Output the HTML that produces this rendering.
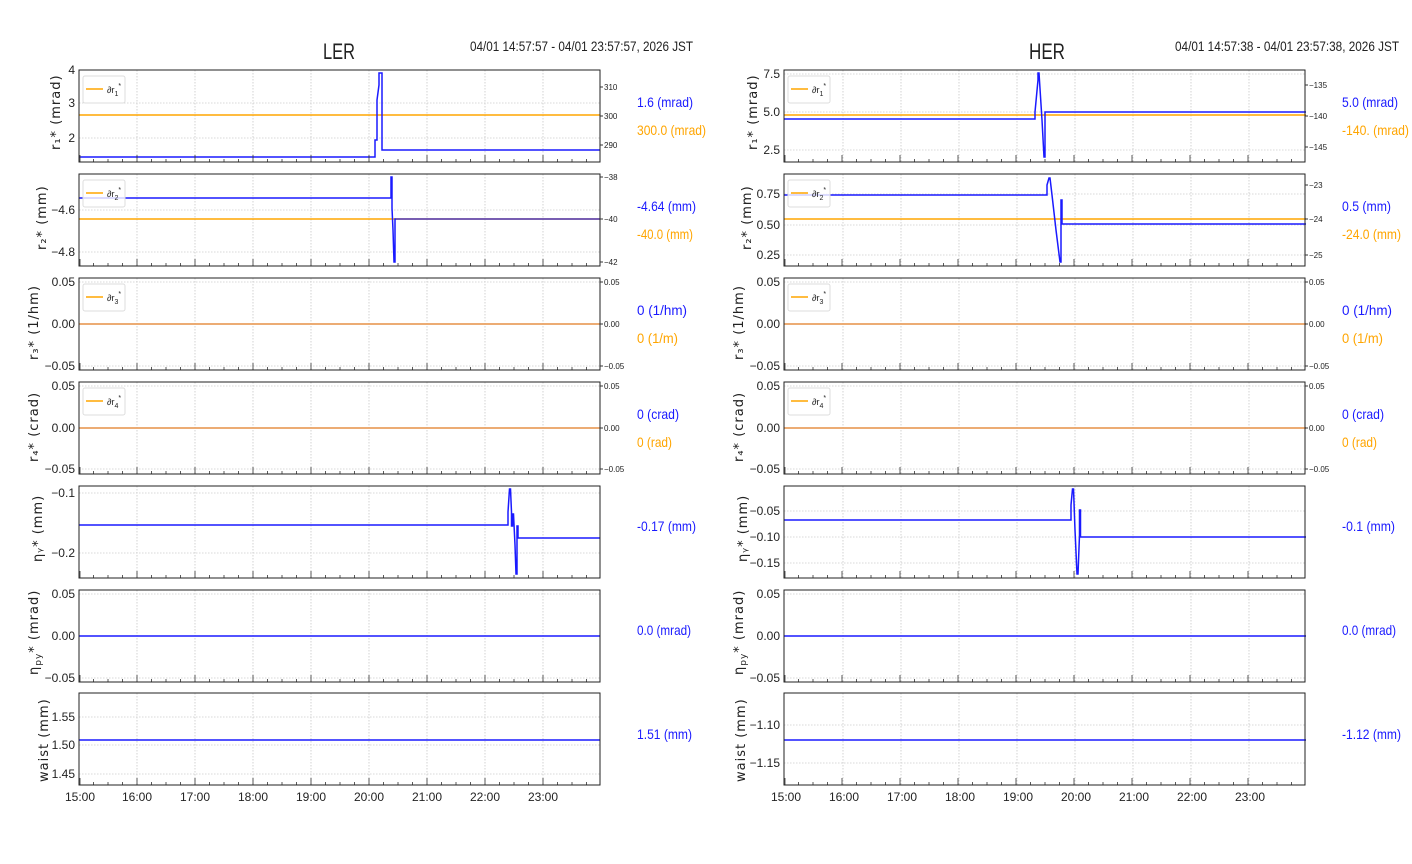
<!DOCTYPE html>
<html><head><meta charset="utf-8"><style>
html,body{margin:0;padding:0;background:#fff;width:1412px;height:864px;overflow:hidden}
svg{display:block}
text{font-family:"Liberation Sans Narrow","Liberation Sans",sans-serif;fill:#222}
.yl{font-size:12px;text-anchor:end}
.yr{font-size:8px}
.ax{font-family:"DejaVu Sans","Liberation Sans",sans-serif;font-size:13px;letter-spacing:1px}
.b{fill:#1a1aff;font-size:14px}
.o{fill:#ffa500;font-size:14px}
.xt{font-size:12px;text-anchor:middle}
</style></head><body>
<svg width="1412" height="864" viewBox="0 0 1412 864" xmlns="http://www.w3.org/2000/svg">
<defs>
<g id="vg"><path d="M137 0V92M195 0V92M253 0V92M311 0V92M369 0V92M427 0V92M485 0V92M543 0V92" stroke="#c8c8c8" stroke-width="0.8" stroke-dasharray="1.5,1.5" fill="none"/></g>
<g id="tk"><path d="M80 92v-7M93.5 92v-3M108 92v-3M122.5 92v-3M137 92v-7M151.5 92v-3M166 92v-3M180.5 92v-3M195 92v-7M209.5 92v-3M224 92v-3M238.5 92v-3M253 92v-7M267.5 92v-3M282 92v-3M296.5 92v-3M311 92v-7M325.5 92v-3M340 92v-3M354.5 92v-3M369 92v-7M383.5 92v-3M398 92v-3M412.5 92v-3M427 92v-7M441.5 92v-3M456 92v-3M470.5 92v-3M485 92v-7M499.5 92v-3M514 92v-3M528.5 92v-3M543 92v-7M557.5 92v-3M572 92v-3M586.5 92v-3" stroke="#333" stroke-width="0.8" fill="none"/>
<rect x="79" y="0" width="521" height="92" fill="none" stroke="#222" stroke-width="1"/></g>
</defs>

<text x="339" y="59" style="font-size:22px;text-anchor:middle" textLength="32" lengthAdjust="spacingAndGlyphs">LER</text>
<text x="470" y="51" style="font-size:14px" textLength="223" lengthAdjust="spacingAndGlyphs">04/01 14:57:57 - 04/01 23:57:57, 2026 JST</text>
<text x="1047" y="59" style="font-size:22px;text-anchor:middle" textLength="36" lengthAdjust="spacingAndGlyphs">HER</text>
<text x="1175" y="51" style="font-size:14px" textLength="224" lengthAdjust="spacingAndGlyphs">04/01 14:57:38 - 04/01 23:57:38, 2026 JST</text>

<g>
<use href="#vg" y="70"/>
<path d="M79 103H600M79 138H600" stroke="#ccc" stroke-width="0.8" stroke-dasharray="1.5,1.5"/>
<path d="M79 115H600" stroke="#ffa500" stroke-width="1.5"/>
<path d="M79 157H375V140L377 140V100L379 85V73H382V150H600" stroke="#1a1aff" stroke-width="1.5" fill="none"/>
<use href="#tk" y="70"/>
<rect x="83" y="76" width="42" height="27" fill="#fff" stroke="#ddd" rx="2"/>
<path d="M86 89H103" stroke="#ffa500" stroke-width="1.5"/><text x="107" y="93" style="font-size:9px">∂r<tspan font-size="7" dy="3">1</tspan><tspan font-size="7" dy="-8">*</tspan></text>
<text class="yl" x="75" y="74">4</text><text class="yl" x="75" y="107">3</text><text class="yl" x="75" y="142">2</text>
<path d="M600 87h3M600 116h3M600 145h3" stroke="#333"/>
<text class="yr" x="604" y="90">310</text><text class="yr" x="604" y="119">300</text><text class="yr" x="604" y="148">290</text>
<text class="ax" transform="translate(60 150) rotate(-90)">r₁* (mrad)</text>
<text class="b" x="637" y="107" textLength="56" lengthAdjust="spacingAndGlyphs">1.6 (mrad)</text><text class="o" x="637" y="135" textLength="69" lengthAdjust="spacingAndGlyphs">300.0 (mrad)</text>

<use href="#vg" y="174"/>
<path d="M79 210H600M79 252H600" stroke="#ccc" stroke-width="0.8" stroke-dasharray="1.5,1.5"/>
<path d="M79 219H600" stroke="#ffa500" stroke-width="1.5"/>
<path d="M79 198H391V177H392V208L393 230L394 262H395V219H600" stroke="#1a1aff" stroke-width="1.5" fill="none"/>
<path d="M396 219H600" stroke="#b07050" stroke-width="1" opacity="0.5"/>
<use href="#tk" y="174"/>
<rect x="83" y="180" width="42" height="27" fill="#fff" fill-opacity="0.8" stroke="#ddd" rx="2"/>
<path d="M86 193H103" stroke="#ffa500" stroke-width="1.5"/><text x="107" y="197" style="font-size:9px">∂r<tspan font-size="7" dy="3">2</tspan><tspan font-size="7" dy="-8">*</tspan></text>
<text class="yl" x="75" y="214">−4.6</text><text class="yl" x="75" y="256">−4.8</text>
<path d="M600 177h3M600 219h3M600 262h3" stroke="#333"/>
<text class="yr" x="604" y="180">−38</text><text class="yr" x="604" y="222">−40</text><text class="yr" x="604" y="265">−42</text>
<text class="ax" transform="translate(46 250) rotate(-90)">r₂* (mm)</text>
<text class="b" x="637" y="211" textLength="59" lengthAdjust="spacingAndGlyphs">-4.64 (mm)</text><text class="o" x="637" y="239" textLength="56" lengthAdjust="spacingAndGlyphs">-40.0 (mm)</text>

<use href="#vg" y="278"/>
<path d="M79 282H600M79 366H600" stroke="#ccc" stroke-width="0.8" stroke-dasharray="1.5,1.5"/>
<path d="M79 324H600" stroke="#e9a060" stroke-width="1.8"/>
<use href="#tk" y="278"/>
<rect x="83" y="284" width="42" height="27" fill="#fff" stroke="#ddd" rx="2"/>
<path d="M86 297H103" stroke="#ffa500" stroke-width="1.5"/><text x="107" y="301" style="font-size:9px">∂r<tspan font-size="7" dy="3">3</tspan><tspan font-size="7" dy="-8">*</tspan></text>
<text class="yl" x="75" y="286">0.05</text><text class="yl" x="75" y="328">0.00</text><text class="yl" x="75" y="370">−0.05</text>
<path d="M600 282h3M600 324h3M600 366h3" stroke="#333"/>
<text class="yr" x="604" y="285">0.05</text><text class="yr" x="604" y="327">0.00</text><text class="yr" x="604" y="369">−0.05</text>
<text class="ax" transform="translate(38 360) rotate(-90)">r₃* (1/hm)</text>
<text class="b" x="637" y="315" textLength="50" lengthAdjust="spacingAndGlyphs">0 (1/hm)</text><text class="o" x="637" y="343" textLength="41" lengthAdjust="spacingAndGlyphs">0 (1/m)</text>

<use href="#vg" y="382"/>
<path d="M79 386H600M79 469H600" stroke="#ccc" stroke-width="0.8" stroke-dasharray="1.5,1.5"/>
<path d="M79 428H600" stroke="#e9a060" stroke-width="1.8"/>
<use href="#tk" y="382"/>
<rect x="83" y="388" width="42" height="27" fill="#fff" stroke="#ddd" rx="2"/>
<path d="M86 401H103" stroke="#ffa500" stroke-width="1.5"/><text x="107" y="405" style="font-size:9px">∂r<tspan font-size="7" dy="3">4</tspan><tspan font-size="7" dy="-8">*</tspan></text>
<text class="yl" x="75" y="390">0.05</text><text class="yl" x="75" y="432">0.00</text><text class="yl" x="75" y="473">−0.05</text>
<path d="M600 386h3M600 428h3M600 469h3" stroke="#333"/>
<text class="yr" x="604" y="389">0.05</text><text class="yr" x="604" y="431">0.00</text><text class="yr" x="604" y="472">−0.05</text>
<text class="ax" transform="translate(38 462) rotate(-90)">r₄* (crad)</text>
<text class="b" x="637" y="419" textLength="42" lengthAdjust="spacingAndGlyphs">0 (crad)</text><text class="o" x="637" y="447" textLength="35" lengthAdjust="spacingAndGlyphs">0 (rad)</text>

<use href="#vg" y="486"/>
<path d="M79 493H600M79 553H600" stroke="#ccc" stroke-width="0.8" stroke-dasharray="1.5,1.5"/>
<path d="M79 525H508V512L509.5 489H510.5L511.5 512V526H512.5V514H513.5L515 545L516 574H517V526H518V538H600" stroke="#1a1aff" stroke-width="1.5" fill="none"/>
<use href="#tk" y="486"/>
<text class="yl" x="75" y="497">−0.1</text><text class="yl" x="75" y="557">−0.2</text>
<text class="ax" transform="translate(42 562) rotate(-90)">ηᵧ* (mm)</text>
<text class="b" x="637" y="531" textLength="59" lengthAdjust="spacingAndGlyphs">-0.17 (mm)</text>

<use href="#vg" y="590"/>
<path d="M79 594H600M79 678H600" stroke="#ccc" stroke-width="0.8" stroke-dasharray="1.5,1.5"/>
<path d="M79 636H600" stroke="#1a1aff" stroke-width="1.5"/>
<use href="#tk" y="590"/>
<text class="yl" x="75" y="598">0.05</text><text class="yl" x="75" y="640">0.00</text><text class="yl" x="75" y="682">−0.05</text>
<text class="ax" transform="translate(38 675) rotate(-90)">η<tspan font-size="9" dy="3">py</tspan><tspan dy="-3">* (mrad)</tspan></text>
<text class="b" x="637" y="635" textLength="54" lengthAdjust="spacingAndGlyphs">0.0 (mrad)</text>

<use href="#vg" y="693"/>
<path d="M79 717H600M79 745H600M79 774H600" stroke="#ccc" stroke-width="0.8" stroke-dasharray="1.5,1.5"/>
<path d="M79 740H600" stroke="#1a1aff" stroke-width="1.5"/>
<use href="#tk" y="693"/>
<text class="yl" x="75" y="721">1.55</text><text class="yl" x="75" y="749">1.50</text><text class="yl" x="75" y="778">1.45</text>
<text class="ax" transform="translate(48 782) rotate(-90)">waist (mm)</text>
<text class="b" x="637" y="739" textLength="55" lengthAdjust="spacingAndGlyphs">1.51 (mm)</text>

<text class="xt" x="80" y="801">15:00</text><text class="xt" x="137" y="801">16:00</text><text class="xt" x="195" y="801">17:00</text><text class="xt" x="253" y="801">18:00</text><text class="xt" x="311" y="801">19:00</text><text class="xt" x="369" y="801">20:00</text><text class="xt" x="427" y="801">21:00</text><text class="xt" x="485" y="801">22:00</text><text class="xt" x="543" y="801">23:00</text>
</g>

<g>
<use href="#vg" x="706" y="70"/>
<path d="M784 74H1306M784 112H1306M784 150H1306" stroke="#ccc" stroke-width="0.8" stroke-dasharray="1.5,1.5"/>
<path d="M784 115H1306" stroke="#ffa500" stroke-width="1.5"/>
<path d="M784 119H1035V112L1038 80V73H1039L1042 120L1044 157H1045V112H1306" stroke="#1a1aff" stroke-width="1.5" fill="none"/>
<use href="#tk" x="705" y="70"/>
<rect x="788" y="76" width="42" height="27" fill="#fff" stroke="#ddd" rx="2"/>
<path d="M791 89H808" stroke="#ffa500" stroke-width="1.5"/><text x="812" y="93" style="font-size:9px">∂r<tspan font-size="7" dy="3">1</tspan><tspan font-size="7" dy="-8">*</tspan></text>
<text class="yl" x="780" y="78">7.5</text><text class="yl" x="780" y="116">5.0</text><text class="yl" x="780" y="154">2.5</text>
<path d="M1305 85h3M1305 116h3M1305 147h3" stroke="#333"/>
<text class="yr" x="1309" y="88">−135</text><text class="yr" x="1309" y="119">−140</text><text class="yr" x="1309" y="150">−145</text>
<text class="ax" transform="translate(757 150) rotate(-90)">r₁* (mrad)</text>
<text class="b" x="1342" y="107" textLength="56" lengthAdjust="spacingAndGlyphs">5.0 (mrad)</text><text class="o" x="1342" y="135" textLength="67" lengthAdjust="spacingAndGlyphs">-140. (mrad)</text>

<use href="#vg" x="706" y="174"/>
<path d="M784 194H1306M784 225H1306M784 255H1306" stroke="#ccc" stroke-width="0.8" stroke-dasharray="1.5,1.5"/>
<path d="M784 219H1306" stroke="#ffa500" stroke-width="1.5"/>
<path d="M784 195H1047V185L1049 178H1050L1052 195L1056 230L1060 262H1061V200H1062V224H1306" stroke="#1a1aff" stroke-width="1.5" fill="none"/>
<use href="#tk" x="705" y="174"/>
<rect x="788" y="180" width="42" height="27" fill="#fff" fill-opacity="0.8" stroke="#ddd" rx="2"/>
<path d="M791 193H808" stroke="#ffa500" stroke-width="1.5"/><text x="812" y="197" style="font-size:9px">∂r<tspan font-size="7" dy="3">2</tspan><tspan font-size="7" dy="-8">*</tspan></text>
<text class="yl" x="780" y="198">0.75</text><text class="yl" x="780" y="229">0.50</text><text class="yl" x="780" y="259">0.25</text>
<path d="M1305 185h3M1305 219h3M1305 255h3" stroke="#333"/>
<text class="yr" x="1309" y="188">−23</text><text class="yr" x="1309" y="222">−24</text><text class="yr" x="1309" y="258">−25</text>
<text class="ax" transform="translate(751 250) rotate(-90)">r₂* (mm)</text>
<text class="b" x="1342" y="211" textLength="49" lengthAdjust="spacingAndGlyphs">0.5 (mm)</text><text class="o" x="1342" y="239" textLength="59" lengthAdjust="spacingAndGlyphs">-24.0 (mm)</text>

<use href="#vg" x="706" y="278"/>
<path d="M784 282H1306M784 366H1306" stroke="#ccc" stroke-width="0.8" stroke-dasharray="1.5,1.5"/>
<path d="M784 324H1306" stroke="#e9a060" stroke-width="1.8"/>
<use href="#tk" x="705" y="278"/>
<rect x="788" y="284" width="42" height="27" fill="#fff" stroke="#ddd" rx="2"/>
<path d="M791 297H808" stroke="#ffa500" stroke-width="1.5"/><text x="812" y="301" style="font-size:9px">∂r<tspan font-size="7" dy="3">3</tspan><tspan font-size="7" dy="-8">*</tspan></text>
<text class="yl" x="780" y="286">0.05</text><text class="yl" x="780" y="328">0.00</text><text class="yl" x="780" y="370">−0.05</text>
<path d="M1305 282h3M1305 324h3M1305 366h3" stroke="#333"/>
<text class="yr" x="1309" y="285">0.05</text><text class="yr" x="1309" y="327">0.00</text><text class="yr" x="1309" y="369">−0.05</text>
<text class="ax" transform="translate(743 360) rotate(-90)">r₃* (1/hm)</text>
<text class="b" x="1342" y="315" textLength="50" lengthAdjust="spacingAndGlyphs">0 (1/hm)</text><text class="o" x="1342" y="343" textLength="41" lengthAdjust="spacingAndGlyphs">0 (1/m)</text>

<use href="#vg" x="706" y="382"/>
<path d="M784 386H1306M784 469H1306" stroke="#ccc" stroke-width="0.8" stroke-dasharray="1.5,1.5"/>
<path d="M784 428H1306" stroke="#e9a060" stroke-width="1.8"/>
<use href="#tk" x="705" y="382"/>
<rect x="788" y="388" width="42" height="27" fill="#fff" stroke="#ddd" rx="2"/>
<path d="M791 401H808" stroke="#ffa500" stroke-width="1.5"/><text x="812" y="405" style="font-size:9px">∂r<tspan font-size="7" dy="3">4</tspan><tspan font-size="7" dy="-8">*</tspan></text>
<text class="yl" x="780" y="390">0.05</text><text class="yl" x="780" y="432">0.00</text><text class="yl" x="780" y="473">−0.05</text>
<path d="M1305 386h3M1305 428h3M1305 469h3" stroke="#333"/>
<text class="yr" x="1309" y="389">0.05</text><text class="yr" x="1309" y="431">0.00</text><text class="yr" x="1309" y="472">−0.05</text>
<text class="ax" transform="translate(743 462) rotate(-90)">r₄* (crad)</text>
<text class="b" x="1342" y="419" textLength="42" lengthAdjust="spacingAndGlyphs">0 (crad)</text><text class="o" x="1342" y="447" textLength="35" lengthAdjust="spacingAndGlyphs">0 (rad)</text>

<use href="#vg" x="706" y="486"/>
<path d="M784 511H1306M784 537H1306M784 563H1306" stroke="#ccc" stroke-width="0.8" stroke-dasharray="1.5,1.5"/>
<path d="M784 520H1071V505L1072.5 489H1073.5L1075 530L1077 574H1078L1079.5 535V510H1080.5V537H1306" stroke="#1a1aff" stroke-width="1.5" fill="none"/>
<use href="#tk" x="705" y="486"/>
<text class="yl" x="780" y="515">−0.05</text><text class="yl" x="780" y="541">−0.10</text><text class="yl" x="780" y="567">−0.15</text>
<text class="ax" transform="translate(747 562) rotate(-90)">ηᵧ* (mm)</text>
<text class="b" x="1342" y="531" textLength="53" lengthAdjust="spacingAndGlyphs">-0.1 (mm)</text>

<use href="#vg" x="706" y="590"/>
<path d="M784 594H1306M784 678H1306" stroke="#ccc" stroke-width="0.8" stroke-dasharray="1.5,1.5"/>
<path d="M784 636H1306" stroke="#1a1aff" stroke-width="1.5"/>
<use href="#tk" x="705" y="590"/>
<text class="yl" x="780" y="598">0.05</text><text class="yl" x="780" y="640">0.00</text><text class="yl" x="780" y="682">−0.05</text>
<text class="ax" transform="translate(743 675) rotate(-90)">η<tspan font-size="9" dy="3">py</tspan><tspan dy="-3">* (mrad)</tspan></text>
<text class="b" x="1342" y="635" textLength="54" lengthAdjust="spacingAndGlyphs">0.0 (mrad)</text>

<use href="#vg" x="706" y="693"/>
<path d="M784 725H1306M784 763H1306" stroke="#ccc" stroke-width="0.8" stroke-dasharray="1.5,1.5"/>
<path d="M784 740H1306" stroke="#1a1aff" stroke-width="1.5"/>
<use href="#tk" x="705" y="693"/>
<text class="yl" x="780" y="729">−1.10</text><text class="yl" x="780" y="767">−1.15</text>
<text class="ax" transform="translate(745 782) rotate(-90)">waist (mm)</text>
<text class="b" x="1342" y="739" textLength="59" lengthAdjust="spacingAndGlyphs">-1.12 (mm)</text>

<text class="xt" x="786" y="801">15:00</text><text class="xt" x="844" y="801">16:00</text><text class="xt" x="902" y="801">17:00</text><text class="xt" x="960" y="801">18:00</text><text class="xt" x="1018" y="801">19:00</text><text class="xt" x="1076" y="801">20:00</text><text class="xt" x="1134" y="801">21:00</text><text class="xt" x="1192" y="801">22:00</text><text class="xt" x="1250" y="801">23:00</text>
</g>
</svg>
</body></html>
